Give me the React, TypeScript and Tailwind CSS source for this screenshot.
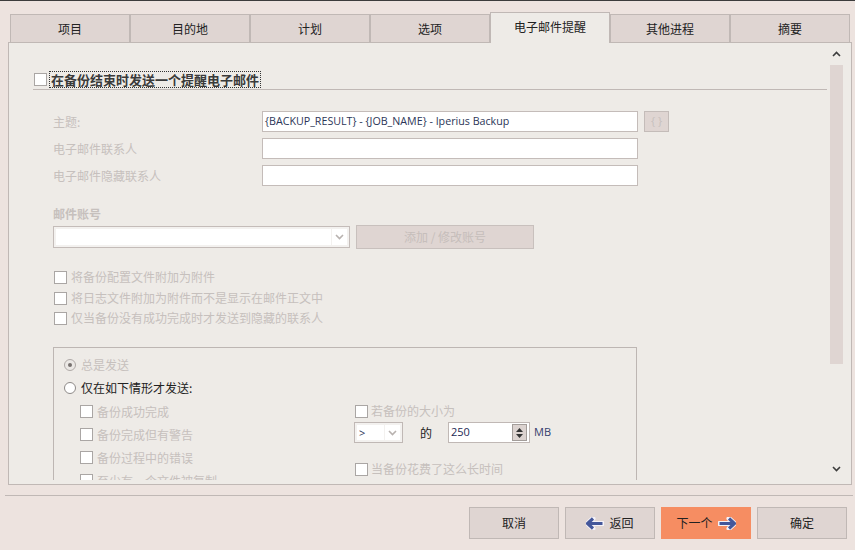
import React from "react";

const tabs = ["项目", "目的地", "计划", "选项", "电子邮件提醒", "其他进程", "摘要"];

function Check() {
  return <span className="block w-[13px] h-[13px] border border-[#aaa6a4] bg-white shrink-0" />;
}

function Chevron({ up = false, color = "#3c3c3c" }: { up?: boolean; color?: string }) {
  return (
    <svg width="9" height="6" viewBox="0 0 9 6" className="block">
      <path
        d={up ? "M1 5 L4.5 1.5 L8 5" : "M1 1 L4.5 4.5 L8 1"}
        stroke={color}
        strokeWidth="1.6"
        fill="none"
      />
    </svg>
  );
}

function Arrow({ right = false }: { right?: boolean }) {
  const d = right ? "M11 1.5 L16.5 6.5 L11 11.5 M16 6.5 H1.5" : "M7 1.5 L1.5 6.5 L7 11.5 M2 6.5 H16.5";
  return (
    <svg width="18" height="13" viewBox="0 0 18 13" className="block">
      <path d={d} stroke="#f4f2f8" strokeWidth="5" fill="none" strokeLinejoin="round" strokeLinecap="round" />
      <path d={d} stroke="#44579a" strokeWidth="3.2" fill="none" strokeLinejoin="miter" />
    </svg>
  );
}

export default function App() {
  return (
    <div className="w-[855px] h-[550px] bg-[#ede3df] border-t border-[#3c3c3c] overflow-hidden font-['Noto_Sans_CJK_SC',sans-serif] text-[12px]">
      {/* tabs */}
      <div className="flex items-end h-[30px] pl-[10px] mt-[11px]">
        {tabs.map((t, i) =>
          i === 4 ? (
            <div
              key={t}
              className="relative z-10 -mb-px w-[120px] h-[31px] border border-b-0 border-[#c0b8b5] bg-[#eeebe7] flex items-center justify-center text-[12px] leading-[16px] text-[#222] pb-[2px]"
            >
              {t}
            </div>
          ) : (
            <div
              key={t}
              className="w-[120px] h-[28px] border border-b-0 border-[#c0b8b5] bg-[#dfd5d2] flex items-center justify-center text-[12px] leading-[16px] text-[#222]"
            >
              {t}
            </div>
          )
        )}
      </div>

      {/* panel */}
      <div className="ml-[8px] w-[844px] h-[443px] border border-[#c0b8b5] bg-[#eeebe7] flex">
        <div className="w-[818px] h-[437px] overflow-hidden shrink-0">
          <div className="pt-[28px]">
            {/* header */}
            <div className="flex items-center h-[17px] pl-[25px]">
              <Check />
              <span className="ml-[2px] border border-dotted border-[#333] px-[1px] text-[13px] font-bold leading-[15px] text-[#3a3a3a]">
                在备份结束时发送一个提醒电子邮件
              </span>
            </div>
            <div className="ml-[24px] mt-[1px] h-px bg-[#c0b8b5]" />

            {/* fields */}
            <div className="mt-[21px] flex items-center h-[21px] pl-[44px]">
              <span className="w-[209px] leading-[16px] text-[#c6c0bd]">主题:</span>
              <div className="w-[376px] h-[21px] border border-[#c4bcb9] bg-white flex items-center px-[2px] font-['Open_Sans',sans-serif] text-[10.7px] text-[#2c3658] whitespace-nowrap">
                {"{BACKUP_RESULT} - {JOB_NAME} - Iperius Backup"}
              </div>
              <div className="ml-[6px] w-[25px] h-[21px] border border-[#c4bcb9] bg-[#dfd5d2] flex items-center justify-center font-['Open_Sans',sans-serif] text-[11px] text-[#c6c0bd]">
                {"{ }"}
              </div>
            </div>
            <div className="mt-[6px] flex items-center h-[21px] pl-[44px]">
              <span className="w-[209px] leading-[16px] text-[#c6c0bd]">电子邮件联系人</span>
              <div className="w-[376px] h-[21px] border border-[#c4bcb9] bg-white" />
            </div>
            <div className="mt-[6px] flex items-center h-[21px] pl-[44px]">
              <span className="w-[209px] leading-[16px] text-[#c6c0bd]">电子邮件隐藏联系人</span>
              <div className="w-[376px] h-[21px] border border-[#c4bcb9] bg-white" />
            </div>

            {/* account */}
            <div className="mt-[20px] pl-[44px] h-[16px] leading-[16px] font-bold text-[#c6c0bd]">邮件账号</div>
            <div className="mt-[3px] flex items-center h-[24px] pl-[44px]">
              <div className="w-[297px] h-[22px] border border-[#c4bcb9] bg-[#f3f1ef] p-[2px] flex">
                <div className="flex-1 bg-white" />
                <div className="ml-px w-[15px] bg-white flex items-center justify-center">
                  <Chevron color="#b8b2af" />
                </div>
              </div>
              <div className="ml-[6px] w-[178px] h-[24px] border border-[#c8c0bd] bg-[#dfd5d2] flex items-center justify-center leading-[16px] text-[#c6bebb]">
                添加 / 修改账号
              </div>
            </div>

            {/* options */}
            <div className="mt-[18px] pl-[45px]">
              <div className="flex items-center h-[20px]">
                <Check />
                <span className="ml-[4px] leading-[16px] text-[#c6c0bd]">将备份配置文件附加为附件</span>
              </div>
              <div className="mt-[1px] flex items-center h-[20px]">
                <Check />
                <span className="ml-[4px] leading-[16px] text-[#c6c0bd]">将日志文件附加为附件而不是显示在邮件正文中</span>
              </div>
              <div className="flex items-center h-[20px]">
                <Check />
                <span className="ml-[4px] leading-[16px] text-[#c6c0bd]">仅当备份没有成功完成时才发送到隐藏的联系人</span>
              </div>
            </div>

            {/* group box */}
            <div className="mt-[19px] ml-[44px] w-[584px] h-[200px] border-t border-l border-r border-[#bdb6b3] pt-[7px]">
              <div className="flex items-center h-[20px] pl-[10px]">
                <span className="w-[12px] h-[12px] rounded-full border border-[#b0aaa8] bg-[#ebe8e5] flex items-center justify-center">
                  <span className="w-[4px] h-[4px] rounded-full bg-[#77716f]" />
                </span>
                <span className="ml-[5px] leading-[16px] text-[#c6c0bd]">总是发送</span>
              </div>
              <div className="mt-[3px] flex items-center h-[20px] pl-[10px]">
                <span className="w-[12px] h-[12px] rounded-full border border-[#8e8a88] bg-white" />
                <span className="ml-[5px] leading-[16px] text-[#222]">仅在如下情形才发送:</span>
              </div>

              <div className="mt-[2px] flex">
                <div className="w-[300px] pl-[26px]">
                  {["备份成功完成", "备份完成但有警告", "备份过程中的错误", "至少有一个文件被复制"].map((l) => (
                    <div key={l} className="flex items-center h-[23px]">
                      <Check />
                      <span className="ml-[4px] leading-[16px] text-[#c6c0bd]">{l}</span>
                    </div>
                  ))}
                </div>
                <div className="flex flex-col">
                  <div className="flex items-center h-[22px] pl-[1px]">
                    <Check />
                    <span className="ml-[3px] leading-[16px] text-[#c6c0bd]">若备份的大小为</span>
                  </div>
                  <div className="flex items-center h-[21px]">
                    <div className="w-[49px] h-[21px] border border-[#c0b8b5] bg-[#f3f1ef] p-[2px] flex">
                      <div className="w-[27px] bg-white flex items-center pl-[2px] font-['Open_Sans',sans-serif] text-[11px] leading-none text-[#2c3658]">
                        &gt;
                      </div>
                      <div className="ml-px flex-1 bg-white flex items-center justify-center">
                        <Chevron color="#b8b2af" />
                      </div>
                    </div>
                    <span className="ml-[17px] leading-[16px] text-[#222]">的</span>
                    <div className="ml-[16px] w-[82px] h-[21px] border border-[#c0b8b5] bg-white flex items-center pl-[2px] pr-[2px]">
                      <span className="flex-1 font-['Open_Sans',sans-serif] text-[11px] text-[#1e2a55]">250</span>
                      <div className="w-[15px] h-[17px] border border-[#a39d9a] bg-[#dcd3d0] flex flex-col items-center justify-center gap-[2px]">
                        <svg width="7" height="4" viewBox="0 0 7 4" className="block">
                          <path d="M0 4 L3.5 0 L7 4 Z" fill="#333" />
                        </svg>
                        <svg width="7" height="4" viewBox="0 0 7 4" className="block">
                          <path d="M0 0 L3.5 4 L7 0 Z" fill="#333" />
                        </svg>
                      </div>
                    </div>
                    <span className="ml-[4px] font-['Open_Sans',sans-serif] text-[11px] text-[#34406e]">MB</span>
                  </div>
                  <div className="mt-[15px] flex items-center h-[22px] pl-[1px]">
                    <Check />
                    <span className="ml-[3px] leading-[16px] text-[#c6c0bd]">当备份花费了这么长时间</span>
                  </div>
                </div>
              </div>
            </div>
          </div>
        </div>

        {/* scrollbar */}
        <div className="w-[24px] flex flex-col pt-[8px] pb-[12px]">
          <div className="ml-[5px]">
            <Chevron up />
          </div>
          <div className="mt-[8px] ml-[3px] w-[13px] h-[299px] bg-[#dfd5d2]" />
          <div className="mt-auto ml-[5px]">
            <Chevron />
          </div>
        </div>
      </div>

      {/* footer */}
      <div className="mt-[10px] ml-[5px] w-[848px] h-px bg-[#c0b8b5]" />
      <div className="mt-[11px] flex justify-end pr-[8px] gap-[6px]">
        <div className="w-[90px] h-[32px] border border-[#c0b8b5] bg-[#dfd5d2] flex items-center justify-center leading-[16px] text-[#222]">
          取消
        </div>
        <div className="w-[90px] h-[32px] border border-[#c0b8b5] bg-[#dfd5d2] flex items-center justify-center leading-[16px] text-[#222]">
          <Arrow />
          <span className="ml-[5px]">返回</span>
        </div>
        <div className="w-[90px] h-[32px] border border-[#f68d62] bg-[#f68d62] flex items-center justify-center leading-[16px] text-[#222]">
          <span>下一个</span>
          <span className="ml-[5px]">
            <Arrow right />
          </span>
        </div>
        <div className="w-[90px] h-[32px] border border-[#c0b8b5] bg-[#dfd5d2] flex items-center justify-center leading-[16px] text-[#222]">
          确定
        </div>
      </div>
    </div>
  );
}
